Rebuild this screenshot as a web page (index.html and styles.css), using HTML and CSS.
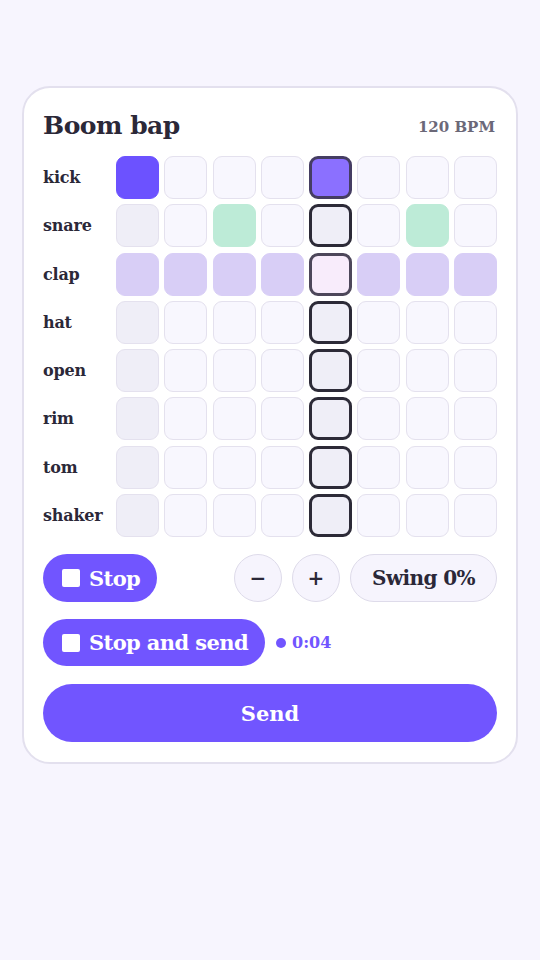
FILE: index.html
```html
<!DOCTYPE html>
<html lang="en">
<head>
    <meta charset="UTF-8">
    <meta name="viewport" content="width=device-width, initial-scale=1.0">
    <title>Boom bap</title>
    <link rel="stylesheet" href="styles.css">
</head>
<body>
    <div class="card">
        <div class="header">
            <h1>Boom bap</h1>
            <span class="bpm">120 BPM</span>
        </div>
        <div class="grid">
            <div class="label">kick</div>
            <div class="cell kick-on"></div><div class="cell"></div><div class="cell"></div><div class="cell"></div>
            <div class="cell head kick-head"></div><div class="cell"></div><div class="cell"></div><div class="cell"></div>

            <div class="label">snare</div>
            <div class="cell first"></div><div class="cell"></div><div class="cell mint"></div><div class="cell"></div>
            <div class="cell head"></div><div class="cell"></div><div class="cell mint"></div><div class="cell"></div>

            <div class="label">clap</div>
            <div class="cell lav"></div><div class="cell lav"></div><div class="cell lav"></div><div class="cell lav"></div>
            <div class="cell head clap-head"></div><div class="cell lav"></div><div class="cell lav"></div><div class="cell lav"></div>

            <div class="label">hat</div>
            <div class="cell first"></div><div class="cell"></div><div class="cell"></div><div class="cell"></div>
            <div class="cell head"></div><div class="cell"></div><div class="cell"></div><div class="cell"></div>

            <div class="label">open</div>
            <div class="cell first"></div><div class="cell"></div><div class="cell"></div><div class="cell"></div>
            <div class="cell head"></div><div class="cell"></div><div class="cell"></div><div class="cell"></div>

            <div class="label">rim</div>
            <div class="cell first"></div><div class="cell"></div><div class="cell"></div><div class="cell"></div>
            <div class="cell head"></div><div class="cell"></div><div class="cell"></div><div class="cell"></div>

            <div class="label">tom</div>
            <div class="cell first"></div><div class="cell"></div><div class="cell"></div><div class="cell"></div>
            <div class="cell head"></div><div class="cell"></div><div class="cell"></div><div class="cell"></div>

            <div class="label">shaker</div>
            <div class="cell first"></div><div class="cell"></div><div class="cell"></div><div class="cell"></div>
            <div class="cell head"></div><div class="cell"></div><div class="cell"></div><div class="cell"></div>
        </div>

        <div class="controls">
            <button class="btn primary stop"><span class="sq"></span>Stop</button>
            <div class="spacer"></div>
            <button class="round">&minus;</button>
            <button class="round">+</button>
            <button class="btn ghost swing">Swing 0%</button>
        </div>

        <div class="record">
            <button class="btn primary"><span class="sq"></span>Stop and send</button>
            <span class="timer"><span class="dot"></span>0:04</span>
        </div>

        <button class="send">Send</button>
    </div>
</body>
</html>
```

FILE: styles.css
```css
body {
    font-family: "DejaVu Serif", "Liberation Serif", serif;
    background-color: #f7f5fe;
    margin: 0;
    padding: 0;
    color: #2b2838;
}
.card {
    margin: 86px 22px 0;
    padding: 19px 19px 20px;
    background-color: #fff;
    border: 2px solid #e3e0ee;
    border-radius: 28px;
}
.header {
    display: flex;
    justify-content: space-between;
    align-items: center;
    height: 36px;
    margin-bottom: 13px;
}
h1 {
    margin: 0;
    font-size: 25px;
    font-weight: bold;
    letter-spacing: -0.5px;
    color: #2b2838;
}
.bpm {
    font-size: 15px;
    font-weight: bold;
    color: #6b6878;
    margin-right: 2px;
    margin-top: 4px;
}
.grid {
    display: grid;
    grid-template-columns: 1fr repeat(8, 43px);
    grid-auto-rows: 43px;
    gap: 5.3px;
}
.label {
    display: flex;
    align-items: center;
    font-size: 16px;
    font-weight: bold;
    letter-spacing: -0.2px;
}
.cell {
    box-sizing: border-box;
    border: 1.5px solid #e4e1ee;
    border-radius: 9px;
    background-color: #f8f7fe;
}
.cell.first {
    background-color: #efeef7;
}
.cell.kick-on {
    background-color: #6c52ff;
    border-color: #6c52ff;
}
.cell.mint {
    background-color: #bdebd7;
    border-color: #bdebd7;
}
.cell.lav {
    background-color: #d8cef6;
    border-color: #d8cef6;
}
.cell.head {
    border: 3px solid #2c2a37;
    background-color: #efeef7;
}
.cell.kick-head {
    background-color: #8b70ff;
    border-color: #453d63;
}
.cell.clap-head {
    background-color: #f8ecfb;
    border-color: #4d475a;
}
button {
    font-family: inherit;
    font-weight: bold;
    cursor: pointer;
}
.controls {
    display: flex;
    align-items: center;
    gap: 10px;
    margin-top: 17px;
    height: 48px;
}
.spacer {
    flex: 1;
}
.btn {
    display: flex;
    align-items: center;
    height: 48px;
    padding: 0 17px 0 19px;
    border-radius: 24px;
    font-size: 21px;
    letter-spacing: -0.6px;
    white-space: nowrap;
}
.btn.primary {
    background-color: #7155ff;
    color: #fff;
    border: none;
}
.sq {
    flex-shrink: 0;
    width: 18px;
    height: 18px;
    background-color: #fff;
    border-radius: 2px;
    margin-right: 9px;
}
.stop {
    width: 114px;
}
.round {
    flex-shrink: 0;
    width: 48px;
    height: 48px;
    border-radius: 50%;
    border: 1.5px solid #dedbea;
    background-color: #f6f4fd;
    color: #2b2838;
    font-size: 20px;
    padding: 0;
}
.btn.ghost {
    flex-shrink: 0;
    background-color: #f6f4fd;
    border: 1.5px solid #dedbea;
    color: #2b2838;
    justify-content: center;
    width: 147px;
    padding: 0;
    font-size: 20px;
}
.record {
    display: flex;
    align-items: center;
    gap: 11px;
    margin-top: 17px;
}
.record .btn {
    height: 47px;
}
.timer {
    display: flex;
    align-items: center;
    color: #7155ff;
    font-weight: bold;
    font-size: 16px;
}
.dot {
    width: 10px;
    height: 10px;
    border-radius: 50%;
    background-color: #7155ff;
    margin-right: 6px;
}
.send {
    display: block;
    width: 100%;
    height: 58px;
    margin-top: 18px;
    border: none;
    border-radius: 29px;
    background-color: #7155ff;
    color: #fff;
    font-size: 21px;
}
```
